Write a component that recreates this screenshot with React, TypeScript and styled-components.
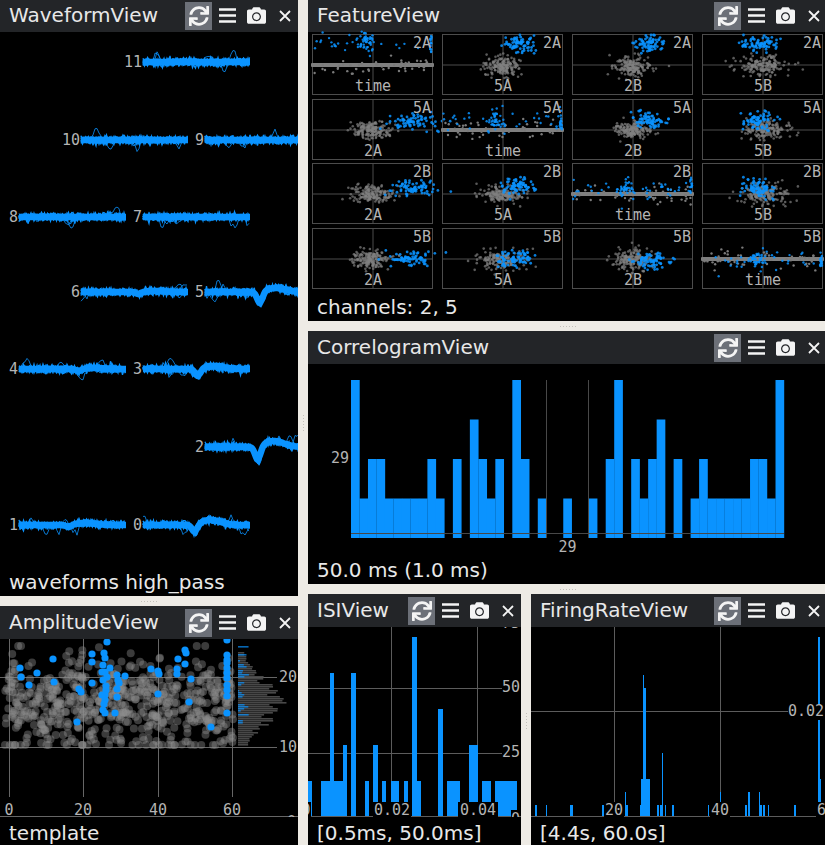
import * as React from 'react';
import styled, { createGlobalStyle } from 'styled-components';
import { FaCamera, FaSync } from 'react-icons/fa';

const BLUE = '#0a93ff';
const GRID = '#5c5c5c';

const GlobalStyle = createGlobalStyle`
    html, body {
        margin: 0;
        padding: 0;
        height: 100%;
        overflow: hidden;
        background-color: #eeebe5;
    }
`;

const Root = styled.div`
    display: flex;
    width: 827px;
    height: 848px;
    margin-top: -1px;
    font-family: 'DejaVu Sans', 'Liberation Sans', sans-serif;
`;
const Column = styled.div<{ $width: number }>`
    display: flex;
    flex-direction: column;
    flex: 0 0 ${props => props.$width}px;
    width: ${props => props.$width}px;
`;
const PanelRow = styled.div`
    display: flex;
    height: 253px;
`;
const Panel = styled.section<{ $height?: number; $width?: number }>`
    display: flex;
    flex-direction: column;
    flex: ${props => (props.$width ? `0 0 ${props.$width}px` : '1 1 auto')};
    min-width: 0;
    height: ${props => props.$height ?? 253}px;
    background-color: #000;
    overflow: hidden;
`;
const TitleBar = styled.header`
    display: flex;
    align-items: center;
    flex: 0 0 33px;
    height: 33px;
    background-color: #232528;
    color: #e8e8e8;
`;
const Title = styled.h2`
    flex: 1 1 auto;
    margin: 0;
    padding-left: 9px;
    font-size: 20px;
    font-weight: 400;
    line-height: 33px;
    white-space: nowrap;
`;
const ToolButton = styled.div<{ $width: number; $active?: boolean }>`
    display: flex;
    align-items: center;
    justify-content: center;
    flex: 0 0 ${props => props.$width}px;
    height: 28px;
    color: #f4f4f4;
    background-color: ${props => (props.$active ? '#6c7078' : 'transparent')};
`;
const Canvas = styled.div`
    flex: 1 1 auto;
    min-height: 0;
    background-color: #000;
`;
const Status = styled.div<{ $tall?: boolean }>`
    flex: 0 0 ${props => (props.$tall ? 30 : 27)}px;
    box-sizing: border-box;
    height: ${props => (props.$tall ? 30 : 27)}px;
    padding: ${props => (props.$tall ? '3px 0 0 9px' : '0 0 0 9px')};
    color: #e8e8e8;
    font-size: 20px;
    line-height: 27px;
    white-space: nowrap;
`;
const Gutter = styled.div<{ $vertical?: boolean }>`
    display: flex;
    align-items: center;
    justify-content: center;
    flex: 0 0 10px;
    &::after {
        content: '';
        display: block;
        width: ${props => (props.$vertical ? '1px' : '16px')};
        height: ${props => (props.$vertical ? '16px' : '1px')};
        background: repeating-linear-gradient(
            ${props => (props.$vertical ? '180deg' : '90deg')},
            #c4c1bb 0 1px,
            transparent 1px 3px
        );
    }
`;
const Plot = styled.svg`
    display: block;
    width: 100%;
    height: 100%;
`;
const Tick = styled.text`
    font-family: 'DejaVu Sans Mono', 'Liberation Mono', monospace;
    font-size: 15px;
    fill: #b4b4b4;
`;
const FeatureGrid = styled.div`
    display: grid;
    grid-template-columns: repeat(4, 121px);
    grid-template-rows: repeat(4, 61px);
    column-gap: 9px;
    row-gap: 3.67px;
    padding: 2px 0 0 4px;
`;
const FeatureCell = styled.svg`
    display: block;
    box-sizing: border-box;
    width: 121px;
    height: 61px;
    border: 1px solid #4c4c4c;
    overflow: visible;
`;

// small seeded generator, the picture has to stay the same on every load
const seeded = (seed: number) => () => {
    seed = (seed + 0x6d2b79f5) | 0;
    let t = Math.imul(seed ^ (seed >>> 15), 1 | seed);
    t = (t + Math.imul(t ^ (t >>> 7), 61 | t)) ^ t;
    return ((t ^ (t >>> 14)) >>> 0) / 4294967296;
};
const gauss = (rand: () => number) =>
    Math.sqrt(-2 * Math.log(rand() + 1e-6)) * Math.cos(2 * Math.PI * rand());

const SyncIcon = () => <FaSync size={20} />;
const BarsIcon = () => (
    <svg width="17" height="15" viewBox="0 0 17 15">
        <path d="M0 1.5H17M0 7.5H17M0 13.5H17" stroke="currentColor" strokeWidth="2.6" />
    </svg>
);
const CameraIcon = () => <FaCamera size={19} />;
const CloseIcon = () => (
    <svg width="12" height="12" viewBox="0 0 12 12">
        <path d="M1 1L11 11M11 1L1 11" stroke="currentColor" strokeWidth="1.8" />
    </svg>
);

const Header = ({ title }: { title: string }) => (
    <TitleBar>
        <Title>{title}</Title>
        <ToolButton $width={27} $active>
            <SyncIcon />
        </ToolButton>
        <ToolButton $width={30}>
            <BarsIcon />
        </ToolButton>
        <ToolButton $width={29}>
            <CameraIcon />
        </ToolButton>
        <ToolButton $width={27}>
            <CloseIcon />
        </ToolButton>
    </TitleBar>
);

interface IChannel {
    label: string;
    x: number;
    y: number;
    spike?: number;
    dip?: number;
    rise?: number;
}
const CHANNELS: IChannel[] = [
    { label: '11', x: 143, y: 62 },
    { label: '10', x: 81, y: 140 },
    { label: '9', x: 205, y: 140 },
    { label: '8', x: 19, y: 217 },
    { label: '7', x: 143, y: 217 },
    { label: '6', x: 81, y: 292, spike: 58, dip: 2, rise: 1 },
    { label: '5', x: 205, y: 292, spike: 55, dip: 11, rise: 4 },
    { label: '4', x: 19, y: 369, spike: 60, dip: 2, rise: 1 },
    { label: '3', x: 143, y: 369, spike: 55, dip: 7, rise: 3 },
    { label: '2', x: 205, y: 447, spike: 53, dip: 13, rise: 6 },
    { label: '1', x: 19, y: 525, spike: 50, dip: 2, rise: 2 },
    { label: '0', x: 143, y: 525, spike: 52, dip: 7, rise: 5 },
];

const templateAt = (c: IChannel, t: number) => {
    if (!c.spike) return 0;
    const dx = t - c.spike;
    const after = t > c.spike ? Math.exp(-Math.pow((dx - 16) / 14, 2)) : 0;
    return (c.dip ?? 0) * Math.exp(-Math.pow(dx / 4, 2)) - (c.rise ?? 0) * after;
};

const Traces = ({ channel, index }: { channel: IChannel; index: number }) => {
    const rand = seeded(index * 97 + 11);
    const lines: string[] = [];
    for (let n = 0; n < 14; n++) {
        const pts: string[] = [];
        for (let t = 0; t <= 107; t += 1.5) {
            const y = channel.y + templateAt(channel, t) + gauss(rand) * 1.8;
            pts.push(`${(channel.x + t).toFixed(1)},${y.toFixed(1)}`);
        }
        lines.push(pts.join(' '));
    }
    const outliers: string[] = [];
    for (let n = 0; n < 5; n++) {
        const at = rand() * 107;
        const depth = (rand() > 0.3 ? 1 : -1) * (5 + rand() * 6);
        const wide = 2 + rand() * 3;
        const pts: string[] = [];
        for (let t = 0; t <= 107; t += 2) {
            const y =
                channel.y +
                templateAt(channel, t) +
                depth * Math.exp(-Math.pow((t - at) / wide, 2)) +
                gauss(rand) * 1.6;
            pts.push(`${(channel.x + t).toFixed(1)},${y.toFixed(1)}`);
        }
        outliers.push(pts.join(' '));
    }
    const core: string[] = [];
    for (let t = 0; t <= 107; t += 1) {
        core.push(`${channel.x + t},${(channel.y + templateAt(channel, t)).toFixed(1)}`);
    }
    return (
        <g fill="none" stroke={BLUE}>
            {outliers.map((p, i) => (
                <polyline key={i} points={p} strokeWidth={0.8} />
            ))}
            {lines.map((p, i) => (
                <polyline key={i} points={p} strokeWidth={1.3} />
            ))}
            <polyline points={core} strokeWidth={6.5} />
        </g>
    );
};

const WaveformPlot = () => (
    <Plot viewBox="0 32 298 537">
        {CHANNELS.map((c, i) => (
            <g key={c.label}>
                <Tick x={c.x - 1} y={c.y + 5} textAnchor="end">
                    {c.label}
                </Tick>
                <Traces channel={c} index={i} />
            </g>
        ))}
    </Plot>
);

interface IFeature {
    top: string;
    bottom: string;
    blue: [number, number, number, number];
    gray?: [number, number, number, number];
}
const FEATURES: IFeature[] = [
    { top: '2A', bottom: 'time', blue: [0, 8, 0, 5] },
    { top: '2A', bottom: '5A', blue: [77, 9, 8, 4], gray: [60, 31, 9, 5] },
    { top: '2A', bottom: '2B', blue: [75, 9, 8, 4], gray: [59, 32, 9, 5] },
    { top: '2A', bottom: '5B', blue: [56, 9, 8, 4], gray: [61, 30, 13, 5] },
    { top: '5A', bottom: '2A', blue: [101, 21, 13, 4], gray: [58, 30, 10, 4] },
    { top: '5A', bottom: 'time', blue: [0, 21, 0, 6] },
    { top: '5A', bottom: '2B', blue: [76, 21, 8, 4], gray: [60, 30, 9, 4] },
    { top: '5A', bottom: '5B', blue: [56, 21, 8, 5], gray: [62, 30, 11, 5] },
    { top: '2B', bottom: '2A', blue: [101, 23, 13, 4], gray: [58, 30, 10, 4] },
    { top: '2B', bottom: '5A', blue: [75, 23, 8, 4], gray: [59, 30, 10, 4] },
    { top: '2B', bottom: 'time', blue: [0, 24, 0, 5] },
    { top: '2B', bottom: '5B', blue: [55, 24, 8, 5], gray: [61, 30, 11, 5] },
    { top: '5B', bottom: '2A', blue: [98, 30, 10, 4], gray: [58, 30, 10, 5] },
    { top: '5B', bottom: '5A', blue: [73, 30, 9, 4], gray: [59, 31, 11, 5] },
    { top: '5B', bottom: '2B', blue: [78, 31, 8, 4], gray: [60, 31, 9, 5] },
    { top: '5B', bottom: 'time', blue: [0, 30, 0, 5] },
];

const FeatureBox = ({ feature, index }: { feature: IFeature; index: number }) => {
    const rand = seeded(index * 31 + 5);
    const dots: React.ReactNode[] = [];
    const isTime = feature.bottom === 'time';
    if (isTime) {
        for (let i = 0; i < 50; i++) {
            const y = 30 + gauss(rand) * 5;
            dots.push(<circle key={`g${i}`} cx={rand() * 119} cy={y} r={1.2} fill="#7a7a7a" />);
        }
        for (let i = 0; i < 90; i++) {
            const pick = rand();
            let x = rand() * 119;
            if (pick < 0.3) x = 52 + gauss(rand) * 2.5;
            else if (pick < 0.42) x = 59 + gauss(rand) * 2;
            else if (pick < 0.55) x = 117 + rand() * 2;
            const y = feature.blue[1] + gauss(rand) * feature.blue[3];
            dots.push(<circle key={`b${i}`} cx={x} cy={y} r={1.2} fill={BLUE} opacity={0.85} />);
        }
    } else if (feature.gray) {
        const [gx, gy, gsx, gsy] = feature.gray;
        for (let i = 0; i < 170; i++) {
            dots.push(
                <circle
                    key={`g${i}`}
                    cx={gx + gauss(rand) * gsx}
                    cy={gy + gauss(rand) * gsy}
                    r={1.3}
                    fill="#808080"
                    opacity={0.7}
                />
            );
        }
        const [bx, by, bsx, bsy] = feature.blue;
        for (let i = 0; i < 75; i++) {
            dots.push(
                <circle
                    key={`b${i}`}
                    cx={bx + gauss(rand) * bsx}
                    cy={Math.max(0, by + gauss(rand) * bsy)}
                    r={1.4}
                    fill={BLUE}
                    opacity={0.85}
                />
            );
        }
    }
    return (
        <FeatureCell viewBox="0 0 119 59">
            <path d="M60 0V59M0 30H119" stroke="#4c4c4c" strokeWidth={1} fill="none" />
            {isTime && <rect x={-2} y={28} width={123} height={4} fill="#7f7f7f" rx={1} />}
            {dots}
            <Tick x={118} y={13} textAnchor="end">
                {feature.top}
            </Tick>
            <Tick x={60} y={56} textAnchor="middle">
                {feature.bottom}
            </Tick>
        </FeatureCell>
    );
};

const CORRELOGRAM = [
    4, 1, 2, 2, 1, 1, 1, 1, 1, 2, 1, 0, 2, 0, 3, 2, 1, 2, 0, 4, 2, 0, 1, 0, 0, 1,
    0, 0, 1, 0, 2, 4, 0, 2, 1, 2, 3, 0, 2, 0, 1, 2, 1, 1, 1, 1, 1, 2, 2, 1, 4,
];

const CorrelogramPlot = () => {
    const binWidth = 433 / CORRELOGRAM.length;
    return (
        <Plot viewBox="308 364 519 193">
            {CORRELOGRAM.map((v, i) =>
                v > 0 ? (
                    <rect
                        key={i}
                        x={351 + i * binWidth}
                        y={538 - v * 39.5}
                        width={binWidth + 0.2}
                        height={v * 39.5}
                        fill={BLUE}
                    />
                ) : null
            )}
            <path d="M546.5 380V538M588.5 380V538M351 533.5H784" stroke="#484848" fill="none" />
            <Tick x={349} y={463} textAnchor="end">
                29
            </Tick>
            <Tick x={567.5} y={552} textAnchor="middle">
                29
            </Tick>
        </Plot>
    );
};

// blue dots of the amplitude view, page coordinates
const AMPLITUDE_SPOTS = [
    [107, 642], [227, 640], [92, 654], [104, 653], [105, 658], [53, 659], [20, 668], [37, 673],
    [21, 677], [29, 685], [54, 682], [92, 662], [103, 665], [105, 672], [107, 677], [103, 680],
    [92, 683], [117, 675], [118, 680], [119, 683], [125, 676], [117, 689], [79, 689], [81, 692],
    [106, 690], [105, 695], [117, 697], [105, 700], [103, 710], [105, 713], [115, 713], [77, 722],
    [211, 727], [227, 713], [189, 702], [158, 694], [191, 679], [177, 674], [177, 669], [178, 659],
    [185, 650], [186, 653], [185, 664], [151, 669], [158, 671], [159, 674], [227, 655], [227, 663],
    [227, 673], [227, 678], [227, 685], [227, 690], [227, 696], [227, 668], [227, 660], [110, 668],
    [102, 672], [106, 686], [102, 695], [104, 704],
];

const AmplitudePlot = () => {
    const rand = seeded(42);
    const gray: React.ReactNode[] = [];
    for (let i = 0; i < 620; i++) {
        const y = Math.min(745, Math.max(646, 703 + gauss(rand) * 24));
        gray.push(<circle key={i} cx={5 + rand() * 229} cy={y} r={4} fill="#8c8c8c" opacity={0.42} />);
    }
    const hist: React.ReactNode[] = [];
    for (let y = 640; y < 746; y += 2) {
        const shape = Math.exp(-Math.pow((y - 702) / 30, 2));
        const w = 4 + shape * 44 * (0.55 + rand() * 0.5);
        if (y > 650) hist.push(<rect key={y} x={238} y={y} width={w} height={1.6} fill="#484848" />);
        if (y < 728 && rand() > 0.35) {
            hist.push(<rect key={`b${y}`} x={238} y={y} width={1 + rand() * 10} height={1.6} fill={BLUE} opacity={0.7} />);
        }
    }
    return (
        <Plot viewBox="0 639 298 178">
            <path
                d="M9.5 639V797M83.5 639V797M158.5 639V797M232.5 639V797M0 677.5H277M0 747.5H277"
                stroke="#666"
                fill="none"
            />
            {gray}
            {hist}
            {AMPLITUDE_SPOTS.map(([x, y], i) => (
                <circle key={i} cx={x} cy={y} r={3.6} fill={BLUE} />
            ))}
            <path d="M0 816.5H298" stroke="#666" fill="none" />
            {[
                ['0', 9],
                ['20', 83],
                ['40', 158],
                ['60', 232],
            ].map(([t, x]) => (
                <Tick key={t} x={x} y={815} textAnchor="middle">
                    {t}
                </Tick>
            ))}
            <Tick x={279} y={682}>
                20
            </Tick>
            <Tick x={279} y={752}>
                10
            </Tick>
            <Tick x={287} y={827}>
                0
            </Tick>
        </Plot>
    );
};

// x range in the page and bar height in level units
const ISI_BARS = [
    [308, 312, 1], [321, 330, 1], [330, 334, 4], [334, 343, 1], [343, 347, 2], [351, 356, 4],
    [365, 369, 1], [373, 378, 2], [382, 386, 1], [391, 399, 1], [404, 408, 1], [412, 417, 5],
    [417, 421, 1], [438, 443, 3], [447, 460, 1], [469, 478, 2], [482, 491, 1], [495, 517, 1],
];

const IsiPlot = () => (
    <Plot viewBox="308 627 213 190">
        <path d="M308 688.5H502M308 753.5H502M391.5 627V802M477.5 627V802" stroke={GRID} fill="none" />
        {ISI_BARS.map(([x0, x1, level]) => (
            <rect key={x0} x={x0} y={817 - level * 36} width={x1 - x0} height={level * 36} fill={BLUE} />
        ))}
        <path d="M308 816.5H521" stroke={GRID} fill="none" />
        <rect x={373} y={802} width={38} height={15} fill="#000" />
        <rect x={458} y={802} width={40} height={15} fill="#000" />
        <rect x={308} y={802} width={3} height={15} fill="#000" />
        <rect x={511} y={810} width={8} height={7} fill="#000" />
        <Tick x={392} y={815} textAnchor="middle">
            0.02
        </Tick>
        <Tick x={478} y={815} textAnchor="middle">
            0.04
        </Tick>
        <Tick x={306} y={815} textAnchor="middle">
            0
        </Tick>
        <Tick x={502} y={692}>
            50
        </Tick>
        <Tick x={502} y={757}>
            25
        </Tick>
        <Tick x={502} y={628}>
            75
        </Tick>
        <Tick x={511} y={824}>
            0
        </Tick>
    </Plot>
);

const FIRING_BARS = [
    [535, 537, 660], [546, 547, 660], [570, 573, 660], [602, 604, 660], [625, 626, 621], [626, 628, 660],
    [640, 641, 660], [641, 643, 582], [643, 644, 270], [644, 646, 309], [646, 650, 582], [657, 659, 660],
    [660, 662, 660], [662, 663, 504], [665, 666, 660], [672, 674, 660], [708, 709, 660], [720, 721, 621],
    [745, 747, 660], [748, 750, 621], [759, 760, 621], [760, 762, 660], [763, 765, 660], [768, 769, 660],
    [794, 796, 660], [818, 820, 156], [820, 821, 582],
];

const FiringPlot = () => (
    <Plot viewBox="531 627 296 190">
        <path d="M531 711.5H788M614.5 627V802M720.5 627V802" stroke={GRID} fill="none" />
        {FIRING_BARS.map(([x0, x1, top]) => (
            <rect key={x0} x={x0} y={585 + top / 3} width={x1 - x0} height={817 - (585 + top / 3)} fill={BLUE} />
        ))}
        <path d="M531 816.5H827" stroke={GRID} fill="none" />
        <rect x={604} y={802} width={20} height={15} fill="#000" />
        <rect x={710} y={802} width={20} height={15} fill="#000" />
        <rect x={788} y={704} width={39} height={16} fill="#000" />
        <rect x={816} y={802} width={11} height={15} fill="#000" />
        <Tick x={614} y={815} textAnchor="middle">
            20
        </Tick>
        <Tick x={720} y={815} textAnchor="middle">
            40
        </Tick>
        <Tick x={826} y={815} textAnchor="middle">
            60
        </Tick>
        <Tick x={788} y={716}>
            0.02
        </Tick>
    </Plot>
);

const App = () => {
    return (
        <Root>
            <GlobalStyle />
            <Column $width={298}>
                <Panel $height={597}>
                    <Header title="WaveformView" />
                    <Canvas>
                        <WaveformPlot />
                    </Canvas>
                    <Status>waveforms high_pass</Status>
                </Panel>
                <Gutter />
                <Panel $height={241}>
                    <Header title="AmplitudeView" />
                    <Canvas>
                        <AmplitudePlot />
                    </Canvas>
                    <Status $tall>template</Status>
                </Panel>
            </Column>
            <Gutter $vertical />
            <Column $width={519}>
                <Panel $height={322}>
                    <Header title="FeatureView" />
                    <Canvas>
                        <FeatureGrid>
                            {FEATURES.map((f, i) => (
                                <FeatureBox key={i} feature={f} index={i} />
                            ))}
                        </FeatureGrid>
                    </Canvas>
                    <Status>channels: 2, 5</Status>
                </Panel>
                <Gutter />
                <Panel>
                    <Header title="CorrelogramView" />
                    <Canvas>
                        <CorrelogramPlot />
                    </Canvas>
                    <Status>50.0 ms (1.0 ms)</Status>
                </Panel>
                <Gutter />
                <PanelRow>
                    <Panel $width={213}>
                        <Header title="ISIView" />
                        <Canvas>
                            <IsiPlot />
                        </Canvas>
                        <Status $tall>[0.5ms, 50.0ms]</Status>
                    </Panel>
                    <Gutter $vertical />
                    <Panel>
                        <Header title="FiringRateView" />
                        <Canvas>
                            <FiringPlot />
                        </Canvas>
                        <Status $tall>[4.4s, 60.0s]</Status>
                    </Panel>
                </PanelRow>
            </Column>
        </Root>
    );
};

export default App;
